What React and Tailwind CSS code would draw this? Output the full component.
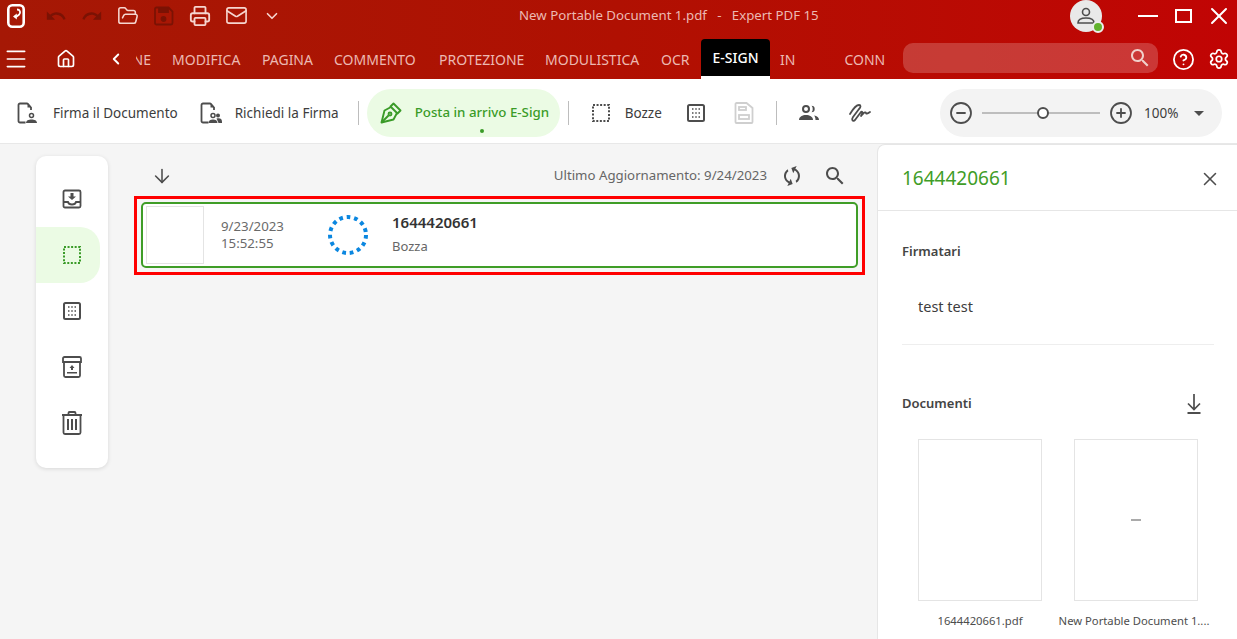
import React from 'react';
import { ChevronDown, ChevronLeft, CircleHelp, FolderOpen, Home, Mail, Menu, Printer, Settings, X, ArrowDown, CircleMinus, CirclePlus } from "lucide-react";

const tabs = [
  { label: 'MODIFICA', className: 'w-[70px] ml-[21px]' },
  { label: 'PAGINA', className: 'w-[52px] ml-[20px]' },
  { label: 'COMMENTO', className: 'w-[85px] ml-[20px]' },
  { label: 'PROTEZIONE', className: 'w-[86px] ml-[20px]' },
  { label: 'MODULISTICA', className: 'w-[96px] ml-[20px]' },
  { label: 'OCR', className: 'w-[30px] ml-[20px]' },
];

function Logo() {
  return (
    <svg width="18" height="24" viewBox="0 0 18 24" fill="none">
      <rect x="1.300" y="1.300" width="15.400" height="21.400" rx="4" stroke="#fff" strokeWidth="2.600" />
      <path d="M10 5.500c3 0 4 3 2.200 5L9 13" stroke="#fff" strokeWidth="1.800" />
      <path d="M6 12.500 9.800 9.500v6z" fill="#fff" />
    </svg>
  );
}

function UndoIcon({ flip }) {
  return (
    <svg width="22" height="22" viewBox="0 0 24 24" fill="#7b1204" className={flip ? '-scale-x-100' : ''}>
      <path d="M12.5 8c-2.650 0-5.050.99-6.900 2.600L2 7v9h9l-3.620-3.620c1.390-1.160 3.160-1.880 5.120-1.880 3.540 0 6.550 2.310 7.600 5.500l2.370-.78C21.080 11.030 17.150 8 12.500 8z" />
    </svg>
  );
}

function SearchGlyph({ color, size = 24 }) {
  return (
    <svg width={size} height={size} viewBox="0 0 24 24" fill={color}>
      <path d="M15.500 14h-.79l-.28-.27C15.410 12.590 16 11.110 16 9.500 16 5.910 13.090 3 9.500 3S3 5.910 3 9.500 5.910 16 9.500 16c1.610 0 3.090-.59 4.230-1.570l.27.28v.79l5 4.990L20.490 19l-4.990-5zm-6 0C7.010 14 5 11.990 5 9.500S7.010 5 9.500 5 14 7.010 14 9.500 11.990 14 9.500 14z" />
    </svg>
  );
}

function SyncIcon() {
  return (
    <svg width="24" height="24" viewBox="0 0 24 24" fill="#4d4d4d" className="rotate-[25deg]">
      <path d="M12 4V1L8 5l4 4V6c3.310 0 6 2.690 6 6 0 1.010-.25 1.970-.7 2.800l1.460 1.460C19.540 15.030 20 13.570 20 12c0-4.420-3.580-8-8-8zm0 14c-3.310 0-6-2.690-6-6 0-1.010.25-1.970.7-2.800L5.240 7.740C4.460 8.970 4 10.430 4 12c0 4.420 3.580 8 8 8v3l4-4-4-4v3z" />
    </svg>
  );
}

function SaveIcon() {
  return (
    <svg width="20" height="20" viewBox="0 0 20 20" fill="none" stroke="#7b1204" strokeWidth="1.800">
      <path d="M2.500 1.500h12l4 4v11.500a1.500 1.500 0 0 1-1.500 1.500H2.500A1.500 1.500 0 0 1 1 17V3a1.500 1.500 0 0 1 1.500-1.500z" />
      <path d="M5 2v4h9V2" fill="#7b1204" />
      <circle cx="9.500" cy="13" r="2" fill="#7b1204" />
    </svg>
  );
}

function DocPerson({ two }) {
  return (
    <svg width="22" height="22" viewBox="0 0 22 22" fill="none" stroke="#4d4d4d" strokeWidth="1.800">
      <path d="M8.500 20.500H3a1.500 1.500 0 0 1-1.500-1.500V3A1.500 1.500 0 0 1 3 1.500h7l1 .5 3 3.500V8" />
      <path d="M10.500 1.500v4h4" fill="#4d4d4d" stroke="none" />
      <circle cx={two ? 13 : 14.500} cy="13.500" r="2" strokeWidth="1.500" />
      {two && <circle cx="18" cy="13.500" r="2" fill="#4d4d4d" stroke="none" />}
      <path d={two ? 'M8.500 21c0-2.500 2-3.500 4.500-3.500s4.500 1 4.500 3.500z' : 'M9 21c0-2.500 2.500-3.500 5.500-3.500S20 18.500 20 21z'} fill="#4d4d4d" stroke="none" />
      {two && <path d="M16.500 16.500c3-1 5.500 0 5.500 3v1.500h-3.500z" fill="#4d4d4d" stroke="none" />}
    </svg>
  );
}

function PenIcon() {
  return (
    <svg width="22" height="22" viewBox="0 0 22 22" fill="none" stroke="#3a9b28" strokeWidth="1.900" strokeLinejoin="round">
      <path d="M13.500 1.500 20.500 8.500 17.500 11.500 10.500 4.500z" />
      <path d="M11 5 4.500 8.500 1.500 20.500 13.500 17.500 17 11" />
      <path d="M1.500 20.500 8.500 13.500" />
      <circle cx="10" cy="12" r="1.500" />
    </svg>
  );
}

function DashedSquare({ color = '#4d4d4d', size = 18 }) {
  return (
    <svg width={size} height={size} viewBox="0 0 18 18" fill="none">
      <rect x="1" y="1" width="16" height="16" stroke={color} strokeWidth="2" strokeDasharray="2 1.560" />
    </svg>
  );
}

function DottedBox({ size = 18 }) {
  return (
    <svg width={size} height={size} viewBox="0 0 18 18" fill="none">
      <rect x="1" y="1" width="16" height="16" rx="1.500" stroke="#4d4d4d" strokeWidth="2" />
      <path d="M5 5h8M5 9h8M5 13h8" stroke="#4d4d4d" strokeWidth="1.500" strokeDasharray="1.500 1.750" />
    </svg>
  );
}

function DisabledDoc() {
  return (
    <svg width="20" height="22" viewBox="0 0 20 22" fill="none" stroke="#cfcfcf" strokeWidth="1.800">
      <path d="M2.500 1h10l6 5v14a1 1 0 0 1-1 1H2.500a1 1 0 0 1-1-1V2a1 1 0 0 1 1-1z" />
      <rect x="5" y="5" width="7" height="3" />
      <rect x="5" y="13" width="10" height="4" />
    </svg>
  );
}

function UsersIcon() {
  return (
    <svg width="22" height="18" viewBox="0 0 22 18" fill="#4d4d4d">
      <circle cx="8" cy="5" r="3" fill="none" stroke="#4d4d4d" strokeWidth="2" />
      <path d="M1 16c0-3.500 3.500-5 7-5s7 1.500 7 5z" />
      <path d="M13.500 1.800a3.200 3.200 0 0 1 0 6.400c1-1 1.200-2 1.200-3.200s-.2-2.200-1.200-3.200z" />
      <path d="M16 11.500c3 .5 5 2 5 4.500h-3.500c0-2-.5-3.500-1.500-4.500z" />
    </svg>
  );
}

function SignatureIcon() {
  return (
    <svg width="24" height="20" viewBox="0 0 24 20" fill="none" stroke="#4d4d4d" strokeWidth="1.800" strokeLinecap="round" strokeLinejoin="round">
      <path d="M2 11C5 6 9 2 11 2c2 0 2 2 0 4l-6 8c-2 3 0 5 2 3l6-8c1-1 2 0 1 2l-1 2c2-2 4-5 5-3 0 1 1 1 4-1" />
    </svg>
  );
}

function InboxIcon() {
  return (
    <svg width="20" height="20" viewBox="0 0 20 20" fill="none" stroke="#4d4d4d" strokeWidth="1.800">
      <rect x="1.500" y="1.500" width="17" height="17" rx="1.500" />
      <path d="M1.500 13h4.500c.5 2 2 2.500 4 2.500s3.500-.5 4-2.500h4.500" />
      <path d="M8.500 4h3v3.500H14L10 11 6 7.500h2.500z" fill="#4d4d4d" stroke="none" />
    </svg>
  );
}

function ArchiveIcon() {
  return (
    <svg width="20" height="22" viewBox="0 0 20 22" fill="none" stroke="#4d4d4d" strokeWidth="1.800">
      <path d="M2.500 1h15a1.500 1.500 0 0 1 1.500 1.500V6H1V2.500A1.500 1.500 0 0 1 2.500 1z" />
      <path d="M2 6v13.500A1.500 1.500 0 0 0 3.500 21h13a1.500 1.500 0 0 0 1.500-1.500V6" />
      <path d="M5 16h10v1.500H5zM9 14v-2H7.500L10 9l2.500 3H11v2z" fill="#4d4d4d" stroke="none" />
    </svg>
  );
}

function TrashIcon() {
  return (
    <svg width="20" height="24" viewBox="0 0 20 24" fill="none" stroke="#4d4d4d" strokeWidth="1.800">
      <path d="M0 4h20M6.500 4V2a1 1 0 0 1 1-1h5a1 1 0 0 1 1 1v2" />
      <path d="M1.500 4v17.500A1.500 1.500 0 0 0 3 23h14a1.500 1.500 0 0 0 1.500-1.500V4" />
      <path d="M6 8v11M10 8v11M14 8v11" strokeWidth="2" />
    </svg>
  );
}

function DownloadLine() {
  return (
    <svg width="16" height="20" viewBox="0 0 16 20" fill="none" stroke="#4d4d4d" strokeWidth="1.700">
      <path d="M8 0v15M2 9.500l6 6 6-6" />
      <path d="M1.500 19h13" strokeWidth="2" />
    </svg>
  );
}

function Avatar() {
  return (
    <div className="relative w-8 h-8 rounded-full bg-[#e9e9e9] flex items-center justify-center">
      <svg width="20" height="18" viewBox="0 0 20 18" fill="none" stroke="#4d4d4d" strokeWidth="1.600">
        <circle cx="10" cy="5" r="3.500" />
        <path d="M2 16c0-3.500 3.500-5 8-5s8 1.500 8 5z" />
      </svg>
      <span className="absolute right-[-2px] bottom-[-1px] w-[12px] h-[12px] rounded-full bg-[#62b32e] border-2 border-[#eeeeee]" />
    </div>
  );
}

function ToolButton({ icon, label, className }) {
  return (
    <div className={`flex items-center ${className}`}>
      {icon}
      <span className="text-[13.500px] text-[#3d3d3d] whitespace-nowrap">{label}</span>
    </div>
  );
}

function Divider({ className }) {
  return <div className={`w-px h-6 bg-[#bdbdbd] ${className}`} />;
}

function Spinner() {
  return (
    <svg width="42" height="42" viewBox="0 0 42 42" fill="none">
      <circle cx="21" cy="21" r="18" stroke="#0b87e0" strokeWidth="4" strokeDasharray="3.700 3.840" />
    </svg>
  );
}

export default function App() {
  const sideItems = [
    { id: 'in', icon: <InboxIcon /> },
    { id: 'draft', icon: <DashedSquare color="#3a9b28" />, active: true },
    { id: 'box', icon: <DottedBox /> },
    { id: 'arch', icon: <ArchiveIcon /> },
    { id: 'trash', icon: <TrashIcon /> },
  ];

  return (
    <div className="w-screen h-screen overflow-hidden flex flex-col bg-[#f5f5f5] font-['Noto_Sans',sans-serif]">
      {/* red header */}
      <div className="h-[79px] shrink-0 flex flex-col bg-gradient-to-r from-[#a51805] via-[#b01002] to-[#c10404]">
        <div className="h-[31px] flex items-center">
          <div className="w-[18px] ml-[7px] flex justify-center"><Logo /></div>
          <div className="ml-[13px] w-9 flex justify-center"><UndoIcon /></div>
          <div className="w-9 flex justify-center"><UndoIcon flip /></div>
          <div className="w-9 flex justify-center"><FolderOpen size={22} color="#f6d6d0" strokeWidth={1.700} /></div>
          <div className="w-9 flex justify-center"><SaveIcon /></div>
          <div className="w-9 flex justify-center"><Printer size={22} color="#f6d6d0" strokeWidth={2} /></div>
          <div className="w-9 flex justify-center"><Mail size={23} color="#f6d6d0" strokeWidth={1.700} /></div>
          <div className="w-9 flex justify-center"><ChevronDown size={18} color="#f6d6d0" strokeWidth={2.200} /></div>
          <div className="ml-[229px] text-[13.250px] text-[#ecb9b2] whitespace-nowrap">New Portable Document 1.pdf&nbsp;&nbsp; - &nbsp; Expert PDF 15</div>
          <div className="ml-auto flex items-center">
            <Avatar />
            <div className="ml-[36px] w-[20px] h-[2px] bg-white" />
            <div className="ml-[17px] w-[17px] h-[14px] border-2 border-white" />
            <X size={28} color="#fff" strokeWidth={1.700} className="ml-[13px] mr-[4px]" />
          </div>
        </div>
        <div className="flex-1 flex items-stretch text-[14px] text-[#ecb9b2]">
          <Menu size={26} color="#fff" strokeWidth={1.500} className="ml-[3px] mt-[8px] self-center" />
          <Home size={20} color="#fff" className="ml-[27px] mt-[8px] self-center" />
          <ChevronLeft size={18} color="#fff" strokeWidth={2.500} className="ml-[31px] mt-[8px] self-center" />
          <div className="w-[15px] ml-[11px] mt-[8px] overflow-hidden self-center flex justify-end"><span>NE</span></div>
          {tabs.map(t => (
            <div key={t.label} className={`${t.className} mt-[8px] self-center whitespace-nowrap`}>{t.label}</div>
          ))}
          <div className="ml-[10px] mt-[8px] w-[69px] rounded-t-[4px] bg-black border-b-[3px] border-white flex items-center justify-center text-white font-medium">E-SIGN</div>
          <div className="ml-[10px] mt-[8px] self-center">IN</div>
          <div className="ml-[49px] mt-[8px] self-center">CONN</div>
          <div className="ml-[18px] mt-[12px] mb-[6px] w-[255px] rounded-[10px] bg-white/20 flex items-center justify-end pr-[6px]">
            <SearchGlyph color="#f0d0cb" />
          </div>
          <CircleHelp size={23} color="#fff" strokeWidth={1.900} className="ml-[14px] mt-[8px] self-center" />
          <Settings size={22} color="#fff" strokeWidth={1.900} className="ml-[13px] mt-[8px] self-center" />
        </div>
      </div>

      {/* toolbar */}
      <div className="h-[65px] shrink-0 pt-[4px] bg-white border-b border-[#e8e8e8] flex items-center">
        <ToolButton className="ml-[17px] gap-[14px]" icon={<DocPerson />} label="Firma il Documento" />
        <ToolButton className="ml-[22px] gap-[13px]" icon={<DocPerson two />} label="Richiedi la Firma" />
        <Divider className="ml-[19px]" />
        <div className="relative ml-[8px] w-[193px] h-[48px] rounded-[24px] bg-[#ebfbe4] flex items-center pl-[13px] gap-[13px]">
          <PenIcon />
          <span className="text-[13.300px] font-medium text-[#3a9b28] whitespace-nowrap">Posta in arrivo E-Sign</span>
          <span className="absolute left-[113px] bottom-[4px] w-[4px] h-[4px] rounded-full bg-[#3a9b28]" />
        </div>
        <Divider className="ml-[8px]" />
        <ToolButton className="ml-[23px] gap-[15px]" icon={<DashedSquare />} label="Bozze" />
        <div className="ml-[25px]"><DottedBox /></div>
        <div className="ml-[29px]"><DisabledDoc /></div>
        <Divider className="ml-[22px]" />
        <div className="ml-[21px]"><UsersIcon /></div>
        <div className="ml-[28px]"><SignatureIcon /></div>
        <div className="ml-auto mr-[15px] w-[282px] h-[48px] rounded-[24px] bg-[#f3f3f3] flex items-center pl-[9px]">
          <CircleMinus size={24} color="#4d4d4d" strokeWidth={1.800} />
          <div className="relative ml-[9px] w-[118px] h-[2px] bg-[#bdbdbd]">
            <span className="absolute left-[55px] top-[-5px] w-[12px] h-[12px] rounded-full bg-white border-2 border-[#4d4d4d]" />
          </div>
          <CirclePlus size={24} color="#4d4d4d" strokeWidth={1.800} className="ml-[9px]" />
          <span className="ml-[11px] text-[13.500px] text-[#3d3d3d]">100%</span>
          <span className="ml-[16px] w-0 h-0 border-x-[5.500px] border-x-transparent border-t-[5px] border-t-[#4d4d4d]" />
        </div>
      </div>

      {/* main */}
      <div className="flex-1 flex min-h-0">
        <div className="ml-[36px] mt-[12px] w-[72px] h-[312px] pt-[15px] bg-white rounded-[10px] shadow-[0_1px_4px_rgba(0,0,0,0.12)] shrink-0">
          {sideItems.map(item => (
            <div key={item.id} className={`h-[56px] w-[64px] flex items-center justify-center pl-[8px] ${item.active ? 'bg-[#ebfbe4] rounded-r-[20px]' : ''}`}>
              {item.icon}
            </div>
          ))}
        </div>

        <div className="w-[769px] shrink-0">
          <div className="h-[52px] flex items-center pt-[12px]">
            <ArrowDown size={22} color="#4d4d4d" strokeWidth={1.700} className="ml-[43px]" />
            <span className="ml-auto text-[13.250px] text-[#666666] whitespace-nowrap">Ultimo Aggiornamento: 9/24/2023</span>
            <div className="ml-[13px]"><SyncIcon /></div>
            <div className="ml-[19px] mr-[30px]"><SearchGlyph color="#4d4d4d" /></div>
          </div>
          <div className="ml-[26px] w-[731px] h-[79px] border-[3.500px] border-[#ff0000] pt-[3px] px-[4px] pb-[4px] flex">
            <div className="flex-1 flex items-center bg-white border-2 border-[#3f9d27] rounded-[5px] pl-[3px]">
              <div className="w-[58px] h-[58px] border border-[#e4e4e4] bg-white shrink-0" />
              <div className="ml-[17px] w-[86px] text-[13.250px] leading-[17px] text-[#6a6a6a]">
                <div>9/23/2023</div>
                <div>15:52:55</div>
              </div>
              <div className="ml-[20px]"><Spinner /></div>
              <div className="ml-[23px] pb-[1px]">
                <div className="text-[15px] font-semibold text-[#333333] leading-[22px]">1644420661</div>
                <div className="text-[13px] text-[#666666] leading-[26px]">Bozza</div>
              </div>
            </div>
          </div>
        </div>

        {/* right panel */}
        <div className="flex-1 bg-white rounded-tl-[8px] border-l border-t border-[#e6e6e6] min-w-0">
          <div className="h-[66px] pt-[2px] border-b border-[#e6e6e6] flex items-center justify-between pl-[24px] pr-[16px]">
            <span className="text-[19px] text-[#3f9d27]">1644420661</span>
            <X size={22} color="#4d4d4d" strokeWidth={1.700} />
          </div>
          <div className="pl-[24px] pr-[23px]">
            <div className="mt-[31px] text-[13px] font-semibold text-[#444444] leading-[18px]">Firmatari</div>
            <div className="mt-[36px] pl-[16px] text-[14.500px] text-[#3d3d3d] leading-[20px]">test test</div>
            <div className="mt-[28px] border-t border-[#eeeeee]" />
            <div className="mt-[50px] flex items-center justify-between pr-[12px] h-[18px]">
              <span className="text-[13px] font-semibold text-[#444444]">Documenti</span>
              <DownloadLine />
            </div>
            <div className="mt-[26px] pl-[16px] flex gap-[32px]">
              <div className="w-[124px] h-[162px] border border-[#e4e4e4] bg-white shrink-0" />
              <div className="w-[124px] h-[162px] border border-[#e4e4e4] bg-white shrink-0 flex items-center justify-center">
                <span className="block w-[10px] h-[2px] bg-[#aaaaaa]" />
              </div>
            </div>
            <div className="mt-[12px] pl-[8px] flex gap-[8px] text-[11.250px] text-[#4d4d4d] leading-[16px]">
              <div className="w-[140px] text-center whitespace-nowrap">1644420661.pdf</div>
              <div className="w-[152px] text-center whitespace-nowrap">New Portable Document 1....</div>
            </div>
          </div>
        </div>
      </div>
    </div>
  );
}
